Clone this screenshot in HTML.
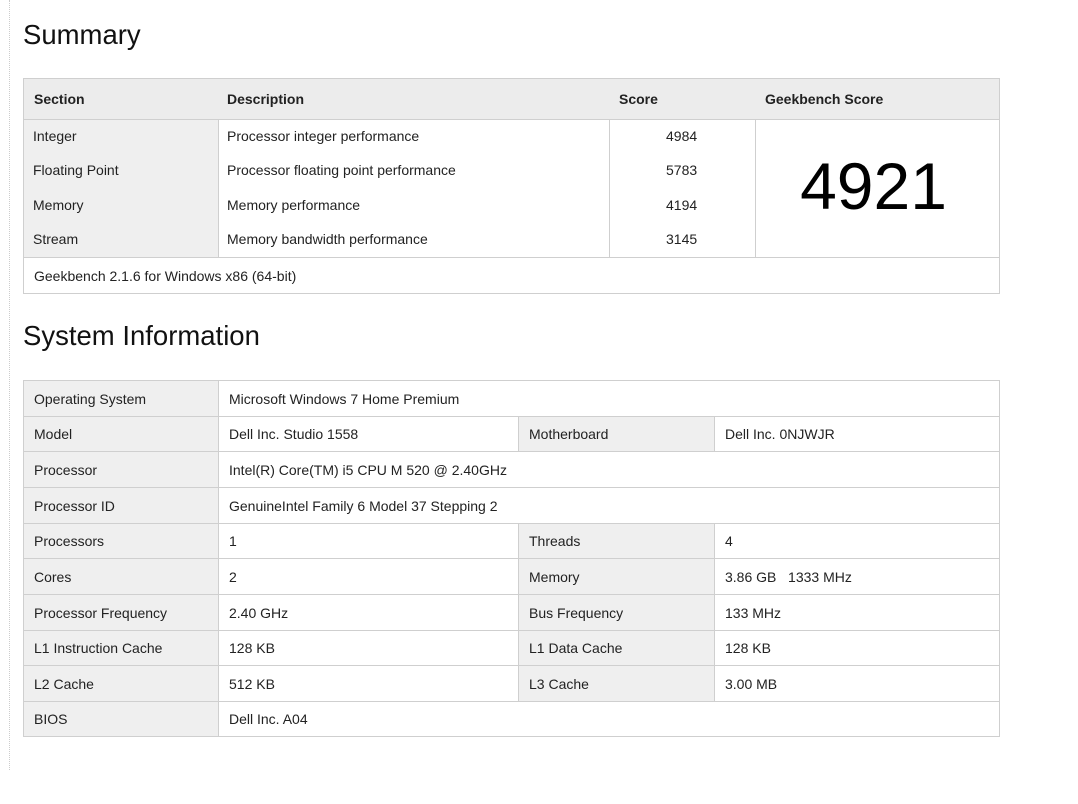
<!DOCTYPE html>
<html><head><meta charset="utf-8"><style>
body{margin:0;width:1078px;height:804px;background:#fff;font-family:"Liberation Sans",Arial,sans-serif;color:#222;position:relative;overflow:hidden}
.c{position:absolute;box-sizing:border-box;border:1px solid #cfcfcf;font-size:14px;padding-left:10px;display:flex;align-items:center;background:#fff}
.g{background:#efefef}
.h{font-weight:bold;background:#ececec}
.t{position:absolute;left:23px;font-size:27.5px;color:#111}
.dl{position:absolute;left:9px;top:0;height:770px;border-left:1px dotted #ccc}
</style></head><body>
<div class="dl"></div>
<div class="t" style="top:19px">Summary</div>
<div class="c h" style="left:23px;top:78px;width:977px;height:42px"></div>
<div style="position:absolute;left:34px;top:91px;font-size:14px;font-weight:bold">Section</div>
<div style="position:absolute;left:227px;top:91px;font-size:14px;font-weight:bold">Description</div>
<div style="position:absolute;left:619px;top:91px;font-size:14px;font-weight:bold">Score</div>
<div style="position:absolute;left:765px;top:91px;font-size:14px;font-weight:bold">Geekbench Score</div>
<div class="c g" style="left:23px;top:119px;width:196px;height:139px"></div>
<div class="c" style="left:218px;top:119px;width:392px;height:139px"></div>
<div class="c" style="left:609px;top:119px;width:147px;height:139px"></div>
<div class="c" style="left:755px;top:119px;width:245px;height:139px;justify-content:center;padding:0 8px 6px 0;font-size:66px;color:#000">4921</div>
<div style="position:absolute;left:33px;top:119px;font-size:14px;line-height:34.3px">Integer<br>Floating Point<br>Memory<br>Stream</div>
<div style="position:absolute;left:227px;top:119px;font-size:14px;line-height:34.3px">Processor integer performance<br>Processor floating point performance<br>Memory performance<br>Memory bandwidth performance</div>
<div style="position:absolute;left:666px;top:119px;font-size:14px;line-height:34.3px">4984<br>5783<br>4194<br>3145</div>
<div class="c" style="left:23px;top:257px;width:977px;height:37px">Geekbench 2.1.6 for Windows x86 (64-bit)</div>

<div class="t" style="top:320px">System Information</div>
<div class="c g" style="left:23px;top:380px;width:196px;height:37px">Operating System</div>
<div class="c" style="left:218px;top:380px;width:782px;height:37px">Microsoft Windows 7 Home Premium</div>

<div class="c g" style="left:23px;top:416px;width:196px;height:36px">Model</div>
<div class="c" style="left:218px;top:416px;width:301px;height:36px">Dell Inc. Studio 1558</div>
<div class="c g" style="left:518px;top:416px;width:197px;height:36px">Motherboard</div>
<div class="c" style="left:714px;top:416px;width:286px;height:36px">Dell Inc. 0NJWJR</div>

<div class="c g" style="left:23px;top:451px;width:196px;height:37px">Processor</div>
<div class="c" style="left:218px;top:451px;width:782px;height:37px">Intel(R) Core(TM) i5 CPU M 520 @ 2.40GHz</div>

<div class="c g" style="left:23px;top:487px;width:196px;height:37px">Processor ID</div>
<div class="c" style="left:218px;top:487px;width:782px;height:37px">GenuineIntel Family 6 Model 37 Stepping 2</div>

<div class="c g" style="left:23px;top:523px;width:196px;height:36px">Processors</div>
<div class="c" style="left:218px;top:523px;width:301px;height:36px">1</div>
<div class="c g" style="left:518px;top:523px;width:197px;height:36px">Threads</div>
<div class="c" style="left:714px;top:523px;width:286px;height:36px">4</div>

<div class="c g" style="left:23px;top:558px;width:196px;height:37px">Cores</div>
<div class="c" style="left:218px;top:558px;width:301px;height:37px">2</div>
<div class="c g" style="left:518px;top:558px;width:197px;height:37px">Memory</div>
<div class="c" style="left:714px;top:558px;width:286px;height:37px">3.86 GB &nbsp;&nbsp;1333 MHz</div>

<div class="c g" style="left:23px;top:594px;width:196px;height:37px">Processor Frequency</div>
<div class="c" style="left:218px;top:594px;width:301px;height:37px">2.40 GHz</div>
<div class="c g" style="left:518px;top:594px;width:197px;height:37px">Bus Frequency</div>
<div class="c" style="left:714px;top:594px;width:286px;height:37px">133 MHz</div>

<div class="c g" style="left:23px;top:630px;width:196px;height:36px">L1 Instruction Cache</div>
<div class="c" style="left:218px;top:630px;width:301px;height:36px">128 KB</div>
<div class="c g" style="left:518px;top:630px;width:197px;height:36px">L1 Data Cache</div>
<div class="c" style="left:714px;top:630px;width:286px;height:36px">128 KB</div>

<div class="c g" style="left:23px;top:665px;width:196px;height:37px">L2 Cache</div>
<div class="c" style="left:218px;top:665px;width:301px;height:37px">512 KB</div>
<div class="c g" style="left:518px;top:665px;width:197px;height:37px">L3 Cache</div>
<div class="c" style="left:714px;top:665px;width:286px;height:37px">3.00 MB</div>

<div class="c g" style="left:23px;top:701px;width:196px;height:36px">BIOS</div>
<div class="c" style="left:218px;top:701px;width:782px;height:36px">Dell Inc. A04</div>
</body></html>
